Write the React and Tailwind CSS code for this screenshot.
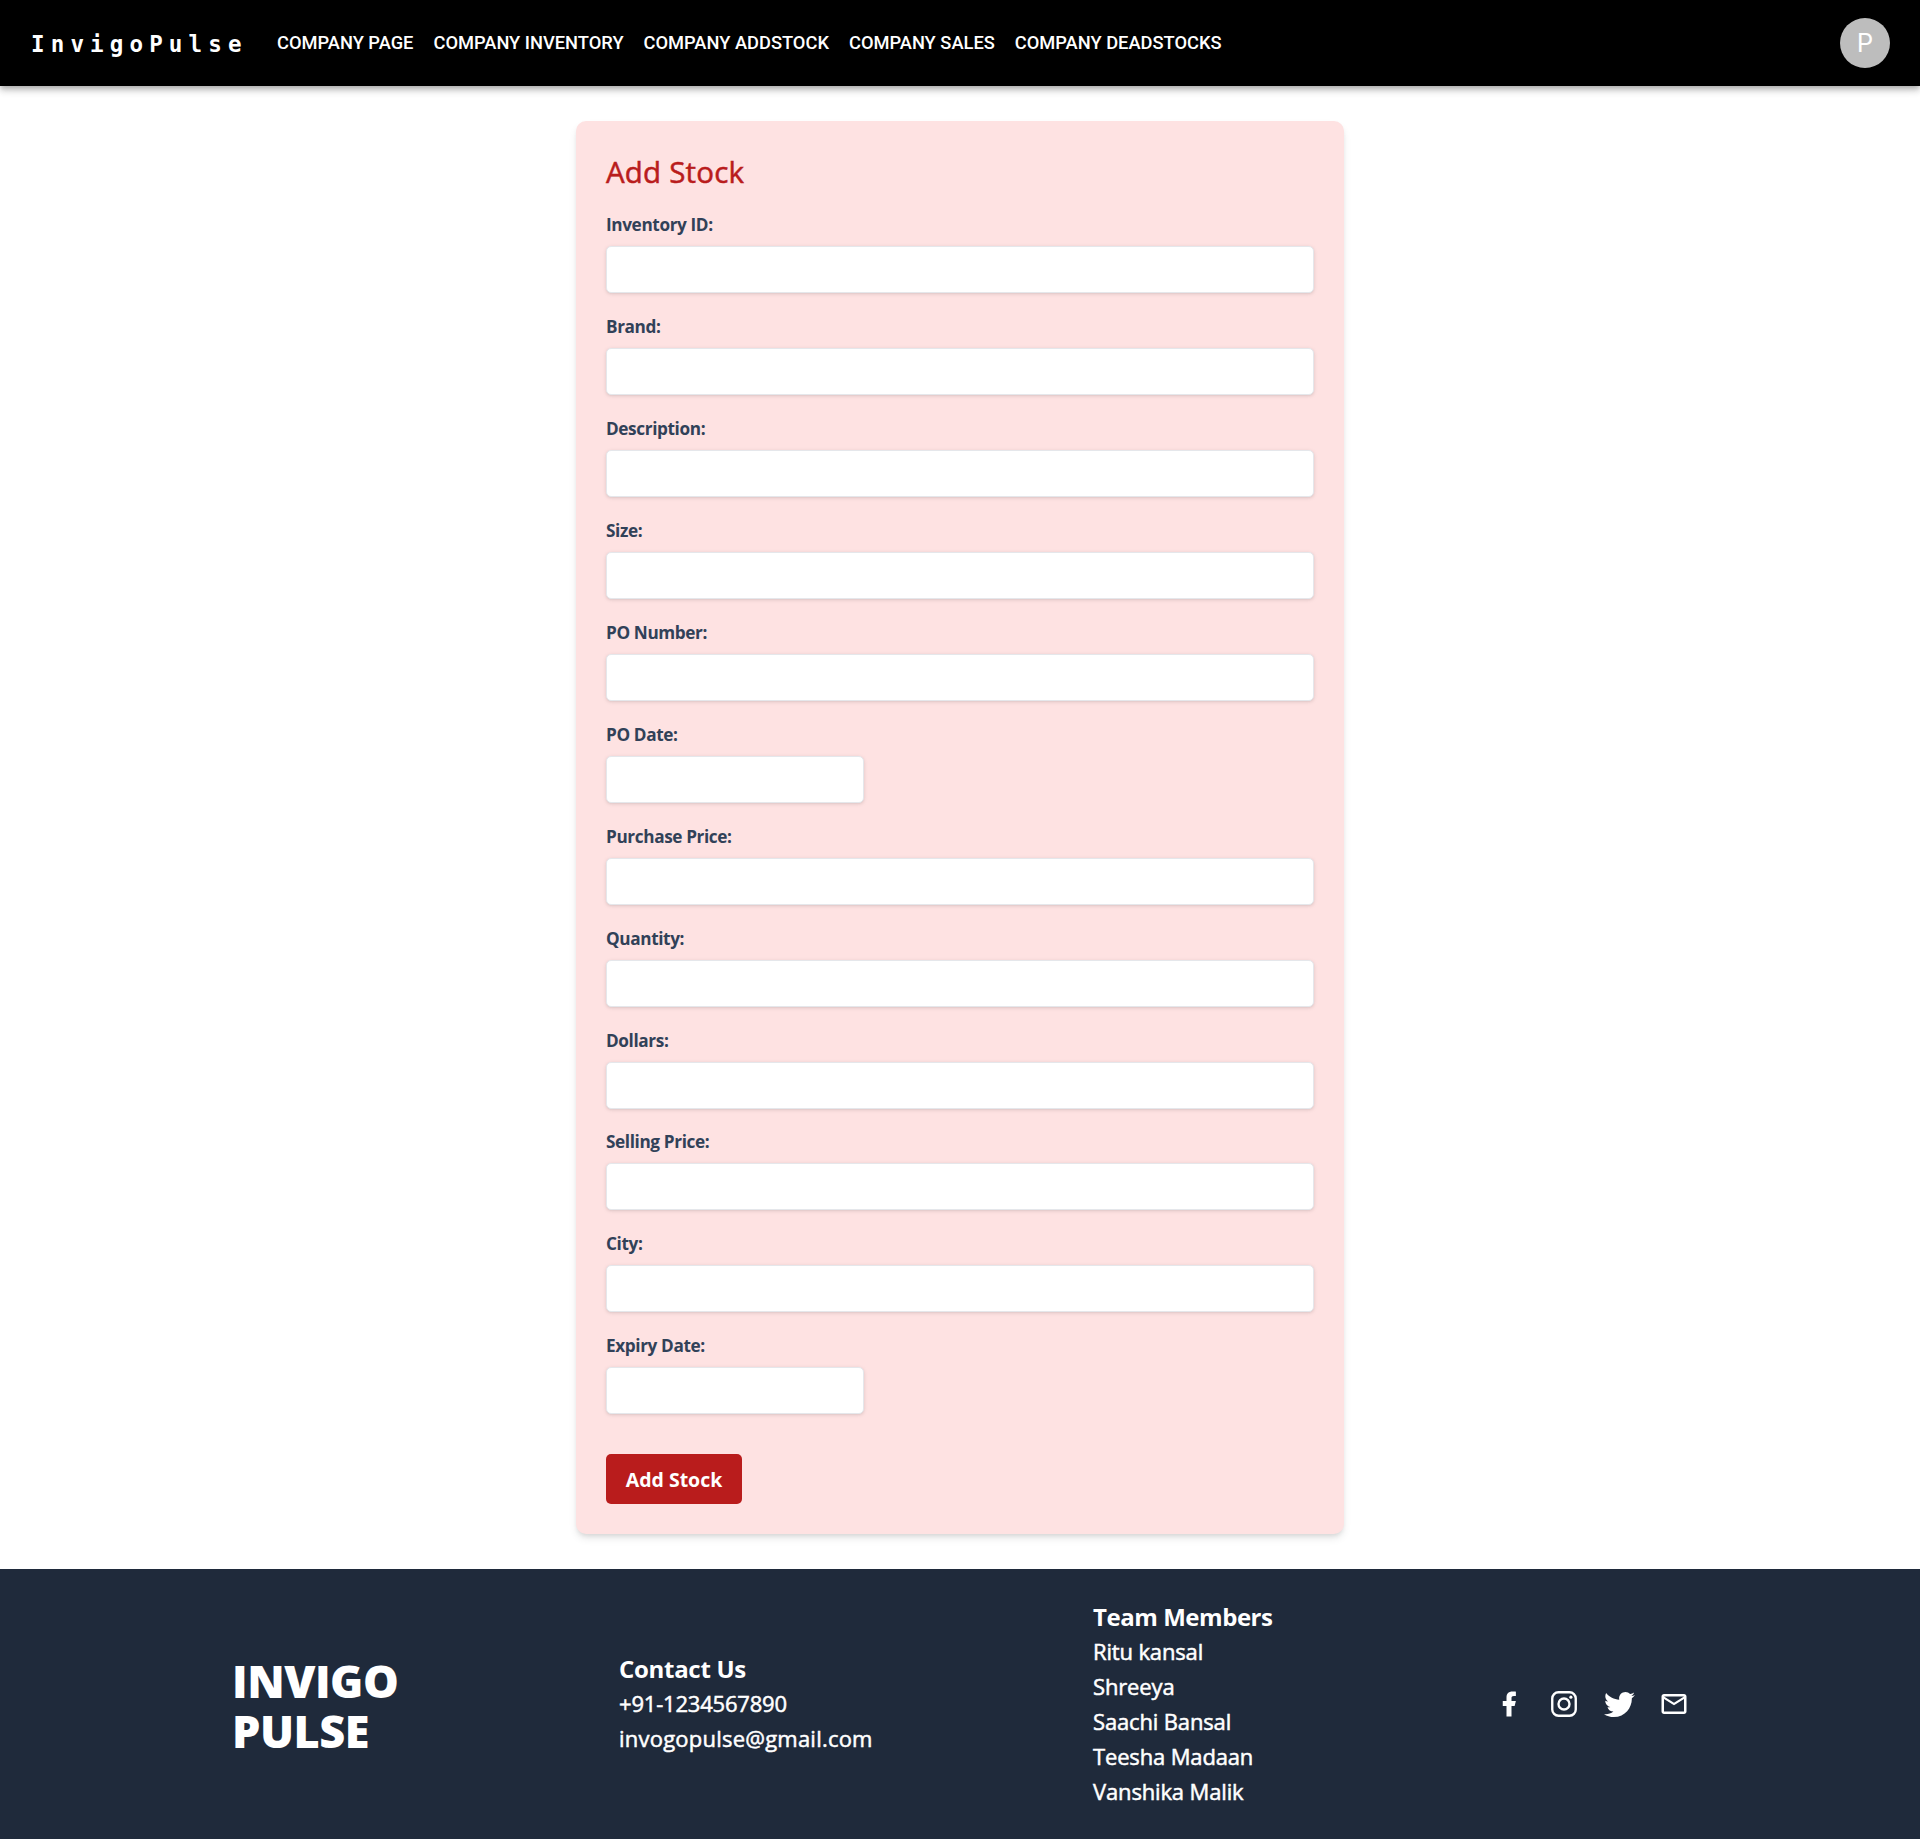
import React from "react";
import { FaTwitter } from "react-icons/fa";

const NAV = [
  "COMPANY PAGE",
  "COMPANY INVENTORY",
  "COMPANY ADDSTOCK",
  "COMPANY SALES",
  "COMPANY DEADSTOCKS",
];

const FIELDS = [
  "Inventory ID:",
  "Brand:",
  "Description:",
  "Size:",
  "PO Number:",
  "PO Date:",
  "Purchase Price:",
  "Quantity:",
  "Dollars:",
  "Selling Price:",
  "City:",
  "Expiry Date:",
];

const TEAM = ["Ritu kansal", "Shreeya", "Saachi Bansal", "Teesha Madaan", "Vanshika Malik"];

function Navbar() {
  return (
    <header className="flex h-[86px] items-center bg-black px-[30px] text-white shadow-[0_2px_5px_-1px_rgba(0,0,0,0.2),0_5px_6px_0_rgba(0,0,0,0.14),0_1px_12px_0_rgba(0,0,0,0.12)]">
      <div className="w-[247px] whitespace-nowrap pl-[1px] pt-[1px] font-['DejaVu_Sans_Mono',monospace] text-[22.5px] font-bold leading-[30px] tracking-[6.15px]">
        InvigoPulse
      </div>
      <nav className="flex gap-5 whitespace-nowrap font-['Roboto',sans-serif] text-[18.3px] font-medium leading-[26px]">
        {NAV.map((label) => (
          <a key={label}>{label}</a>
        ))}
      </nav>
      <div className="ml-auto flex size-[50px] items-center justify-center rounded-full bg-[#bdbdbd] font-['Roboto',sans-serif] text-[25px] leading-none">
        P
      </div>
    </header>
  );
}

function Field({ label }) {
  const isDate = label.includes("Date");
  return (
    <div className="h-[101.95px]">
      <label className="block h-[36px] whitespace-nowrap text-[17.2px] font-bold leading-[29.5px] tracking-[-0.38px] text-slate-700">
        {label}
      </label>
      <input
        className={
          (isDate ? "w-[258px]" : "w-full") +
          " block h-[47px] rounded-[5px] border border-gray-200 bg-white shadow-[0_1px_4px_0_rgba(0,0,0,0.1),0_1px_3px_-1px_rgba(0,0,0,0.1)] outline-none"
        }
      />
    </div>
  );
}

function Socials() {
  return (
    <div className="flex gap-[25px]">
      <svg viewBox="0 0 24 24" className="size-[30px]" fill="currentColor">
        <path d="M14 13.5h2.5l1-4H14v-2c0-1.03 0-2 2-2h1.5V2.14c-.326-.043-1.557-.14-2.857-.14C11.928 2 10 3.657 10 6.7v2.8H7v4h3V22h4v-8.5z" />
      </svg>
      <svg viewBox="0 0 24 24" className="size-[30px]" fill="none" stroke="currentColor" strokeWidth="1.9">
        <rect x="2.6" y="2.6" width="18.8" height="18.8" rx="5" />
        <circle cx="12" cy="12" r="4.4" />
        <circle cx="17.5" cy="6.5" r="1.25" fill="currentColor" stroke="none" />
      </svg>
      <div className="flex size-[30px] items-center justify-center">
        <FaTwitter className="size-[31px] shrink-0" />
      </div>
      <svg viewBox="0 0 24 24" className="size-[30px]" fill="currentColor">
        <path d="M22 6c0-1.100-.9-2-2-2H4c-1.100 0-2 .9-2 2v12c0 1.100.9 2 2 2h16c1.100 0 2-.9 2-2V6zm-2 0l-8 5-8-5h16zm0 12H4V8l8 5 8-5v10z" />
      </svg>
    </div>
  );
}

export default function App() {
  return (
    <div className="min-h-[1841px] w-full bg-white font-['Open_Sans','Noto_Sans',sans-serif]">
      <Navbar />
      <main className="flex h-[1483.4px] justify-center pt-[35px]">
        <form className="h-[1413.4px] w-[768px] rounded-[10px] bg-[#fee2e2] px-[30px] pt-[30px] shadow-[0_5px_8px_-1px_rgba(0,0,0,0.1),0_3px_5px_-2px_rgba(0,0,0,0.1)]">
          <h2 className="h-[59px] text-[29.5px] leading-[42px] tracking-[0.2px] text-[#b91c1c] [-webkit-text-stroke:0.5px]">
            Add Stock
          </h2>
          {FIELDS.map((f) => (
            <Field key={f} label={f} />
          ))}
          <button
            type="button"
            className="mt-[20.5px] block h-[50px] w-[136px] whitespace-nowrap rounded-[5px] bg-[#b91c1c] pt-[3px] text-[19.5px] font-bold leading-[30px] text-white"
          >
            Add Stock
          </button>
        </form>
      </main>
      <footer className="flex h-[269.6px] items-center bg-[#1f2a3b] pl-[232px] text-white">
        <div className="w-[387px] pt-[4px] text-[45px] font-extrabold leading-[50px] tracking-[-0.5px]">
          <p>INVIGO</p>
          <p>PULSE</p>
        </div>
        <div className="w-[474px] whitespace-nowrap pb-[2px] text-[22px] leading-[35px] [-webkit-text-stroke:0.5px]">
          <h3 className="pt-[1px] text-[24px] font-bold leading-[34px] tracking-[-0.3px] [-webkit-text-stroke:0px]">Contact Us</h3>
          <p className="tracking-[-0.2px]">+91-1234567890</p>
          <p className="tracking-[0.22px]">invogopulse@gmail.com</p>
        </div>
        <div className="w-[401px] whitespace-nowrap text-[22px] leading-[35px] tracking-[-0.15px] [-webkit-text-stroke:0.5px]">
          <h3 className="pt-[1px] text-[24px] font-bold leading-[34px] tracking-[-0.45px] [-webkit-text-stroke:0px]">Team Members</h3>
          {TEAM.map((t) => (
            <p key={t}>{t}</p>
          ))}
        </div>
        <Socials />
      </footer>
    </div>
  );
}
